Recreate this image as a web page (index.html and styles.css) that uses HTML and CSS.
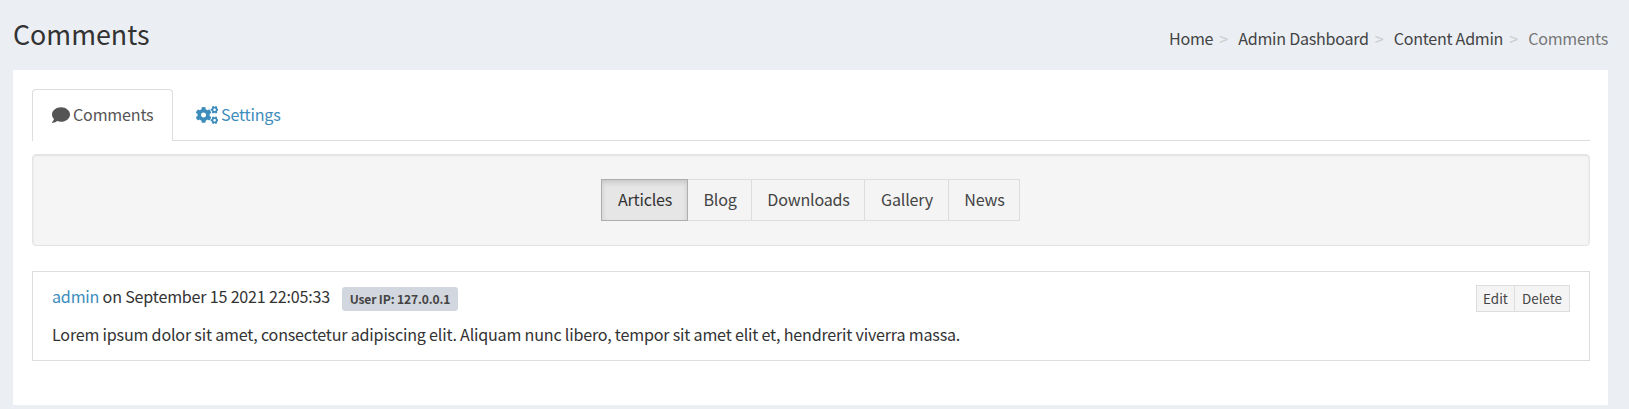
FILE: index.html
```html
<!DOCTYPE html>
<html lang="en">
<head>
<meta charset="utf-8">
<title>Comments</title>
<link rel="stylesheet" href="styles.css">
</head>
<body>
<header class="page-header">
  <h1 class="title">Comments</h1>
  <nav class="breadcrumb">
    <a class="crumb crumb-home" href="#">Home</a><span class="sep">&gt;</span>
    <a class="crumb crumb-dash" href="#">Admin Dashboard</a><span class="sep">&gt;</span>
    <a class="crumb crumb-content" href="#">Content Admin</a><span class="sep">&gt;</span>
    <span class="crumb current">Comments</span>
  </nav>
</header>
<main class="panel">
  <nav class="tabs">
    <a class="tab active" href="#">
      <svg class="icon-comment" viewBox="0 0 512 512"><path d="M256 32C114.6 32 0 125.1 0 240c0 49.6 21.4 95 57 130.7C44.5 421.1 2.7 466 2.2 466.5c-2.2 2.3-2.8 5.7-1.5 8.7S4.8 480 8 480c66.3 0 116-31.8 140.6-51.4 32.7 12.3 69 19.4 107.4 19.4 141.4 0 256-93.1 256-208S397.4 32 256 32z"/></svg>
      <span>Comments</span>
    </a>
    <a class="tab" href="#">
      <svg class="icon-cogs" viewBox="0 0 640 512"><path d="M512.1 191l-8.2 14.3c-3 5.3-9.4 7.5-15.1 5.4-11.8-4.4-22.6-10.7-32.1-18.6-4.6-3.8-5.8-10.5-2.8-15.7l8.2-14.3c-6.9-8-12.3-17.3-15.9-27.4h-16.5c-6 0-11.2-4.3-12.2-10.3-2-12-2.1-24.6 0-37.1 1-6 6.2-10.4 12.2-10.4h16.5c3.6-10.1 9-19.4 15.9-27.4l-8.2-14.3c-3-5.2-1.9-11.9 2.8-15.7 9.5-7.9 20.4-14.2 32.1-18.6 5.7-2.1 12.1.1 15.1 5.4l8.2 14.3c10.5-1.9 21.2-1.9 31.7 0L552 6.3c3-5.3 9.4-7.5 15.1-5.4 11.8 4.4 22.6 10.7 32.1 18.6 4.6 3.8 5.8 10.5 2.8 15.7l-8.2 14.3c6.9 8 12.3 17.3 15.9 27.4h16.5c6 0 11.2 4.3 12.2 10.3 2 12 2.1 24.6 0 37.1-1 6-6.2 10.4-12.2 10.4h-16.5c-3.6 10.1-9 19.4-15.9 27.4l8.2 14.3c3 5.2 1.9 11.9-2.8 15.7-9.5 7.9-20.4 14.2-32.1 18.6-5.7 2.1-12.1-.1-15.1-5.4l-8.2-14.3c-10.4 1.9-21.2 1.9-31.7 0zm-10.5-58.8c38.5 29.6 82.4-14.3 52.8-52.8-38.5-29.7-82.4 14.3-52.8 52.8zM386.3 286.1l33.7 16.8c10.1 5.8 14.5 18.1 10.5 29.1-8.9 24.2-26.4 46.4-42.6 65.8-7.4 8.9-20.2 11.1-30.3 5.3l-29.1-16.8c-16 13.7-34.6 24.6-54.9 31.7v33.6c0 11.6-8.3 21.6-19.7 23.6-24.6 4.2-50.4 4.4-75.9 0-11.5-2-20-11.9-20-23.6V418c-20.3-7.2-38.9-18-54.9-31.7L74 403c-10 5.8-22.9 3.6-30.3-5.3-16.2-19.4-33.3-41.6-42.2-65.7-4-10.9.4-23.2 10.5-29.1l33.3-16.8c-3.9-20.9-3.9-42.4 0-63.4L12 205.8c-10.1-5.8-14.6-18.1-10.5-29 8.9-24.2 26-46.4 42.2-65.8 7.4-8.9 20.2-11.1 30.3-5.3l29.1 16.8c16-13.7 34.6-24.6 54.9-31.7V57.1c0-11.5 8.2-21.5 19.6-23.5 24.6-4.2 50.5-4.4 76-.1 11.5 2 20 11.9 20 23.6v33.6c20.3 7.2 38.9 18 54.9 31.7l29.1-16.8c10-5.8 22.9-3.6 30.3 5.3 16.2 19.4 33.2 41.6 42.1 65.8 4 10.9.1 23.2-10 29.1l-33.7 16.8c3.9 21 3.9 42.5 0 63.5zm-117.6 21.1c59.2-77-28.7-164.9-105.7-105.7-59.2 77 28.7 164.9 105.7 105.7zm243.4 182.7l-8.2 14.3c-3 5.3-9.4 7.5-15.1 5.4-11.8-4.4-22.6-10.7-32.1-18.6-4.6-3.8-5.8-10.5-2.8-15.7l8.2-14.3c-6.9-8-12.3-17.3-15.9-27.4h-16.5c-6 0-11.2-4.3-12.2-10.3-2-12-2.1-24.6 0-37.1 1-6 6.2-10.4 12.2-10.4h16.5c3.6-10.1 9-19.4 15.9-27.4l-8.2-14.3c-3-5.2-1.9-11.9 2.8-15.7 9.5-7.9 20.4-14.2 32.1-18.6 5.7-2.1 12.1.1 15.1 5.4l8.2 14.3c10.5-1.9 21.2-1.9 31.7 0l8.2-14.3c3-5.3 9.4-7.5 15.1-5.4 11.8 4.4 22.6 10.7 32.1 18.6 4.6 3.8 5.8 10.5 2.8 15.7l-8.2 14.3c6.9 8 12.3 17.3 15.9 27.4h16.5c6 0 11.2 4.3 12.2 10.3 2 12 2.1 24.6 0 37.1-1 6-6.2 10.4-12.2 10.4h-16.5c-3.6 10.1-9 19.4-15.9 27.4l8.2 14.3c3 5.2 1.9 11.9-2.8 15.7-9.5 7.9-20.4 14.2-32.1 18.6-5.7 2.1-12.1-.1-15.1-5.4l-8.2-14.3c-10.4 1.9-21.2 1.9-31.7 0zM501.6 431c38.5 29.6 82.4-14.3 52.8-52.8-38.5-29.6-82.4 14.3-52.8 52.8z"/></svg>
      <span>Settings</span>
    </a>
  </nav>
  <div class="well">
    <div class="group">
      <a class="btn pressed" href="#">Articles</a>
      <a class="btn blog" href="#">Blog</a>
      <a class="btn downloads" href="#">Downloads</a>
      <a class="btn gallery" href="#">Gallery</a>
      <a class="btn news" href="#">News</a>
    </div>
  </div>
  <article class="comment">
    <div class="meta">
      <p class="byline"><a class="author" href="#">admin</a> on September 15 2021 22:05:33</p>
      <span class="badge">User IP: 127.0.0.1</span>
      <div class="actions"><a class="small edit" href="#">Edit</a><a class="small delete" href="#">Delete</a></div>
    </div>
    <p class="text">Lorem ipsum dolor sit amet, consectetur adipiscing elit. Aliquam nunc libero, tempor sit amet elit et, hendrerit viverra massa.</p>
  </article>
</main>
</body>
</html>
```
FILE: styles.css
```css
* { box-sizing: border-box; }
body {
  margin: 0;
  height: 409px;
  overflow: hidden;
  background: #ebeff4;
  color: #333;
  font: 16.1px/26px "Noto Sans CJK SC", "Noto Sans", sans-serif;
  letter-spacing: -0.197px;
  white-space: nowrap;
}
a { color: inherit; text-decoration: none; }
p { margin: 0; }
.page-header {
  display: flex;
  justify-content: space-between;
  height: 70px;
  padding: 14px 21px 0 13px;
}
.title {
  margin: 0;
  font-size: 26.8px;
  font-weight: 400;
  line-height: 40px;
  letter-spacing: 0;
}
.breadcrumb { display: flex; padding-top: 11px; color: #444; letter-spacing: -0.27px; }
.sep { width: 25px; padding-left: 6px; color: #ccc; font-size: 16px; }
.current { color: #777; }
.panel {
  height: 335px;
  margin: 0 21px 0 13px;
  padding: 19px 18px 0 19px;
  background: #fff;
}
.tabs {
  display: flex;
  height: 52px;
  border-bottom: 1px solid #ddd;
}
.tab {
  display: flex;
  align-items: flex-start;
  height: 52px;
  gap: 3px;
  padding: 11px 19px 0;
  border: 1px solid transparent;
  border-bottom: 0;
  color: #3c8dbc;
}
.active {
  width: 141px;
  margin-right: 2.6px;
  border-color: #ddd;
  border-radius: 4px 4px 0 0;
  background: #fff;
  color: #555;
}
.icon-comment, .icon-cogs { flex: none; height: 18px; margin-top: 5px; fill: currentColor; }
.icon-comment { width: 18px; }
.icon-cogs { width: 22.5px; }
.well {
  display: flex;
  justify-content: center;
  height: 92px;
  margin-top: 13px;
  padding: 24px 2px 0 0;
  border: 1px solid #e3e3e3;
  border-radius: 4px;
  background: #f5f5f5;
  box-shadow: inset 0 1px 2px rgba(0,0,0,.08);
}
.group { display: flex; height: 42px; background: #f4f4f4; color: #444; }
.btn {
  padding-left: 2px;
  border: 1px solid #ddd;
  border-left: 0;
  line-height: 38px;
  text-align: center;
}
.pressed {
  width: 87px;
  border: 1px solid #adadad;
  background: #e6e6e6;
  color: #333;
  box-shadow: inset 0 3px 5px rgba(0,0,0,.125);
}
.blog { width: 64px; }
.downloads { width: 113px; }
.gallery { width: 84px; }
.news { width: 71px; }
.comment {
  height: 90px;
  margin-top: 25px;
  padding: 11px 19px 0 19px;
  border: 1px solid #ddd;
}
.meta { display: flex; height: 38px; }
.badge {
  width: 116px;
  height: 24px;
  margin: 4px 0 0 12px;
  border-radius: 3px;
  background: #d2d6de;
  color: #444;
  font-size: 12.1px;
  font-weight: 700;
  line-height: 24px;
  letter-spacing: -0.15px;
  text-align: center;
}
.actions { display: flex; height: 27px; margin: 2px 0 0 auto; color: #444; }
.small {
  border: 1px solid #ddd;
  background: #f4f4f4;
  font-size: 13.4px;
  line-height: 25px;
  letter-spacing: 0;
  text-align: center;
}
.edit { width: 38px; border-right: 0; }
.delete { width: 56px; }
.author { color: #3c8dbc; }
```
